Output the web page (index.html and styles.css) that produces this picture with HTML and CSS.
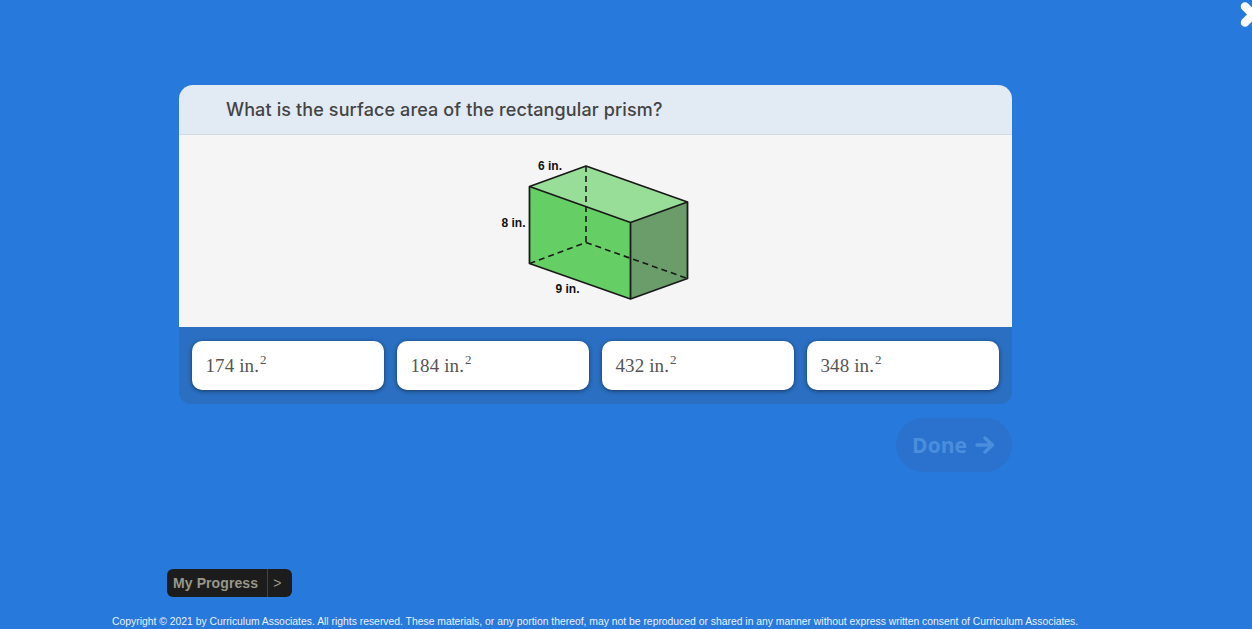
FILE: index.html
```html
<!DOCTYPE html>
<html lang="en">
<head>
    <meta charset="UTF-8">
    <title>Surface area</title>
    <link rel="stylesheet" href="styles.css">
</head>
<body>
    <button class="close" aria-label="Close">
        <svg width="12" height="30" viewBox="0 0 12 30">
            <path d="M5 6.500 L13 14.500 L5 22.500" fill="none" stroke="#fff" stroke-width="8.500" stroke-linecap="round" stroke-linejoin="miter"/>
        </svg>
    </button>

    <main class="stage">
        <section class="card">
            <h1 class="question">What is the surface area of the rectangular prism?</h1>
            <div class="figure">
                <svg class="prism" width="200" height="170" viewBox="0 0 200 170">
                    <polygon points="34.500,40.500 91,20 192.500,56 135.500,76.500" fill="#98dd98"/>
                    <polygon points="34.500,40.500 135.500,76.500 135.500,153 34.500,117.500" fill="#65cf65"/>
                    <polygon points="135.500,76.500 192.500,56 192.500,132.500 135.500,153" fill="#6a9d6a"/>
                    <g fill="none" stroke="#1a1a1a" stroke-width="1.600" stroke-dasharray="6 4">
                        <path d="M91 20 V96.500"/>
                        <path d="M34.500 117.500 L91 96.500"/>
                        <path d="M91 96.500 L192.500 132.500"/>
                    </g>
                    <g fill="none" stroke="#1a1a1a" stroke-width="1.800" stroke-linejoin="round">
                        <polygon points="34.500,40.500 91,20 192.500,56 192.500,132.500 135.500,153 34.500,117.500"/>
                        <path d="M34.500 40.500 L135.500 76.500 L192.500 56 M135.500 76.500 V153"/>
                    </g>
                    <g class="prism-label">
                        <text x="43" y="24">6 in.</text>
                        <text x="6.500" y="81">8 in.</text>
                        <text x="60.500" y="147">9 in.</text>
                    </g>
                </svg>
            </div>
            <div class="answers">
                <button class="answer">174 in.<sup>2</sup></button>
                <button class="answer">184 in.<sup>2</sup></button>
                <button class="answer">432 in.<sup>2</sup></button>
                <button class="answer">348 in.<sup>2</sup></button>
            </div>
        </section>

        <div class="actions">
            <button class="done">Done
                <svg width="20" height="18" viewBox="0 0 20 18">
                    <path d="M2 9 H17 M10 2 L17.500 9 L10 16" fill="none" stroke="currentColor" stroke-width="3.500" stroke-linecap="round" stroke-linejoin="round"/>
                </svg>
            </button>
        </div>
    </main>

    <footer class="foot">
        <div class="progress">
            <span class="progress-name">My Progress</span>
            <span class="progress-arrow">&gt;</span>
        </div>
        <p class="copyright">Copyright © 2021 by Curriculum Associates. All rights reserved. These materials, or any portion thereof, may not be reproduced or shared in any manner without express written consent of Curriculum Associates.</p>
    </footer>
</body>
</html>
```

FILE: styles.css
```css
html, body {
    height: 100%;
}

body {
    margin: 0;
    height: 629px;
    overflow: hidden;
    background-color: #2779dc;
    display: flex;
    flex-direction: column;
    font-family: "Liberation Sans", sans-serif;
    position: relative;
}

button {
    border: none;
    padding: 0;
    cursor: pointer;
}

.close {
    position: absolute;
    top: 0;
    right: 0;
    background: none;
    line-height: 0;
}

.stage {
    width: 833px;
    margin: 85px 0 0 178.5px;
}

.card {
    border-radius: 14px 14px 12px 12px;
    overflow: hidden;
}

.question {
    margin: 0;
    height: 49px;
    padding-left: 47.5px;
    background-color: #e2eaf4;
    border-bottom: 1px solid #d5dbe2;
    color: #444;
    font-family: "Inter", sans-serif;
    font-size: 18px;
    font-weight: 500;
    letter-spacing: 0.12px;
    line-height: 49px;
}

.figure {
    height: 192px;
    background-color: #f5f5f5;
    display: flex;
    justify-content: center;
    align-items: center;
}

.prism-label {
    font-family: "Liberation Sans", sans-serif;
    font-size: 12px;
    font-weight: 700;
    fill: #111;
}

.answers {
    display: grid;
    grid-template-columns: repeat(4, 1fr);
    gap: 13px;
    padding: 14px 13px;
    background-color: #2a6fc2;
}

.answer {
    height: 49px;
    padding-left: 14px;
    background-color: #fff;
    border-radius: 10px;
    box-shadow: 0 1px 4px rgba(0, 0, 0, 0.5);
    color: #555;
    font-family: "Liberation Serif", serif;
    font-size: 19px;
    letter-spacing: 0.1px;
    text-align: left;
}

.answer sup {
    font-size: 13px;
    line-height: 0;
    vertical-align: 7.5px;
    margin-left: 1px;
}

.actions {
    display: flex;
    justify-content: flex-end;
    margin-top: 14px;
}

.done {
    width: 116px;
    height: 54px;
    border-radius: 27px;
    background-color: #2a72cd;
    color: #4a8edd;
    font-family: "Open Sans", sans-serif;
    font-size: 21px;
    font-weight: 700;
    display: flex;
    align-items: center;
    justify-content: center;
    gap: 8px;
}

.foot {
    margin-top: auto;
}

.progress {
    display: inline-flex;
    align-items: center;
    height: 28px;
    margin-left: 167px;
    background-color: #1c1c1c;
    border-radius: 6px;
    color: #97978a;
    font-size: 14px;
    font-weight: 700;
    letter-spacing: 0.1px;
}

.progress-name {
    padding: 0 9px 0 6px;
    line-height: 28px;
    border-right: 1px solid #444;
}

.progress-arrow {
    padding: 0 11px 0 5px;
    font-weight: 400;
}

.copyright {
    margin: 18px 0 1px 112px;
    color: #e8f0fa;
    font-size: 10.36px;
    line-height: 13px;
    white-space: nowrap;
}
```
